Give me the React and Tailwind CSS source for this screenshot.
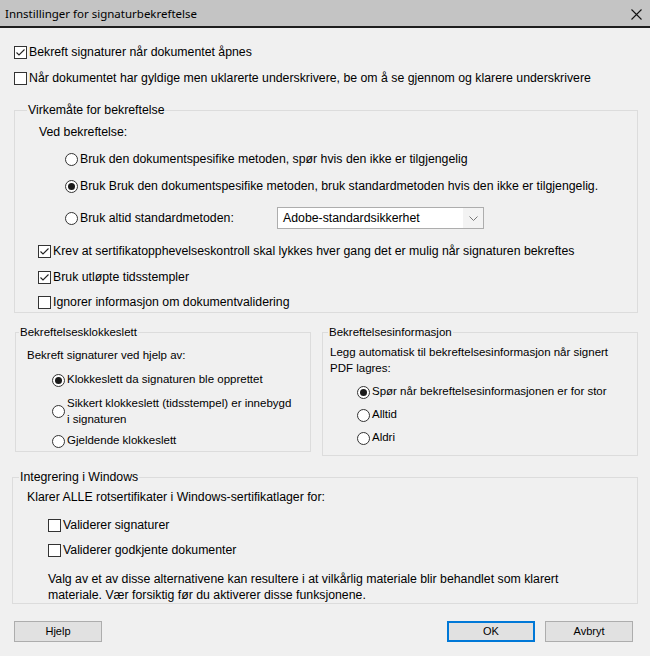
import React from 'react';

const font = { fontFamily: '"Liberation Sans", Arial, sans-serif' };

function CheckBox({ checked }) {
  return (
    <span className="flex h-[13px] w-[13px] shrink-0 items-center justify-center border border-[#333] bg-white">
      {checked && (
        <svg width="11" height="11" viewBox="0 0 11 11">
          <polyline points="1.5,5.5 4,8 9.5,2.5" fill="none" stroke="#222" strokeWidth="1.1" />
        </svg>
      )}
    </span>
  );
}

function Radio({ checked }) {
  return (
    <span className="flex h-[13px] w-[13px] shrink-0 items-center justify-center rounded-full border border-[#333] bg-white">
      {checked && <span className="h-[7px] w-[7px] rounded-full bg-[#1a1a1a]" />}
    </span>
  );
}

function Option({ type, checked, children, className = '' }) {
  return (
    <div className={`flex h-[20px] items-center gap-[2px] ${className}`}>
      {type === 'radio' ? <Radio checked={checked} /> : <CheckBox checked={checked} />}
      <span>{children}</span>
    </div>
  );
}

function Group({ title, className = '', legendClass = 'ml-[6px]', children }) {
  return (
    <fieldset className={`border border-[#dcdcdc] p-0 ${className}`}>
      <legend className={`px-[1px] leading-[16px] ${legendClass}`}>{title}</legend>
      {children}
    </fieldset>
  );
}

function Button({ primary, children }) {
  return (
    <button
      className={`h-[21px] w-[88px] bg-[#e1e1e1] text-[11px] ${
        primary ? 'border-2 border-[#0078d7]' : 'border border-[#adadad]'
      }`}
    >
      {children}
    </button>
  );
}

export default function App() {
  return (
    <div className="flex h-[656px] w-[650px] flex-col overflow-hidden bg-[#f0f0f0] text-[12.3px] text-black" style={font}>
      <div className="flex h-[28px] shrink-0 items-center justify-between border-b-2 border-[#1e1e1e] bg-[#c4c4c4] pl-[5px] pr-[8px] pt-[2px]">
        <span className="text-[11.5px]" style={{ fontFamily: '"Noto Sans", "Open Sans", sans-serif' }}>
          Innstillinger for signaturbekreftelse
        </span>
        <svg width="11" height="11" viewBox="0 0 11 11">
          <path d="M0.5 0.5L10.5 10.5M10.5 0.5L0.5 10.5" stroke="#111" strokeWidth="1.1" />
        </svg>
      </div>

      <div className="flex flex-col pl-[14px]">
        <Option type="check" checked className="mt-[14px]">Bekreft signaturer når dokumentet åpnes</Option>
        <Option type="check" className="mt-[6px]">
          Når dokumentet har gyldige men uklarerte underskrivere, be om å se gjennom og klarere underskrivere
        </Option>
      </div>

      <Group title="Virkemåte for bekreftelse" legendClass="ml-[12px]" className="ml-[14px] mt-[14px] w-[624px]">
        <div className="mt-[4px] flex h-[20px] items-center pl-[24px]">Ved bekreftelse:</div>
        <div className="flex flex-col pl-[50px]">
          <Option type="radio" className="mt-[7px]">
            Bruk den dokumentspesifike metoden, spør hvis den ikke er tilgjengelig
          </Option>
          <Option type="radio" checked className="mt-[7px]">
            Bruk Bruk den dokumentspesifike metoden, bruk standardmetoden hvis den ikke er tilgjengelig.
          </Option>
          <div className="mt-[11px] flex h-[22px] items-center">
            <Option type="radio" className="w-[212px]">Bruk altid standardmetoden:</Option>
            <div className="flex h-[22px] w-[207px] items-stretch border border-[#adadad] bg-white">
              <span className="flex flex-1 items-center pl-[5px]">Adobe-standardsikkerhet</span>
              <span className="flex w-[20px] items-center justify-center bg-[#f3f3f3]">
                <svg width="9" height="5" viewBox="0 0 9 5">
                  <polyline points="0.5,0.5 4.5,4.5 8.5,0.5" fill="none" stroke="#777" strokeWidth="1" />
                </svg>
              </span>
            </div>
          </div>
        </div>
        <div className="flex flex-col pl-[23px]">
          <Option type="check" checked className="mt-[12px]">
            Krev at sertifikatopphevelseskontroll skal lykkes hver gang det er mulig når signaturen bekreftes
          </Option>
          <Option type="check" checked className="mt-[6px]">Bruk utløpte tidsstempler</Option>
          <Option type="check" className="mt-[5px]">Ignorer informasjon om dokumentvalidering</Option>
        </div>
      </Group>

      <div className="mt-[11px] flex items-start gap-[11px] pl-[15px] text-[11.5px]">
        <Group title="Bekreftelsesklokkeslett" legendClass="ml-[3px]" className="w-[296px]">
          <div className="mt-[6px] flex h-[20px] items-center pl-[11px]">Bekreft signaturer ved hjelp av:</div>
          <div className="flex flex-col pl-[36px]">
            <Option type="radio" checked className="mt-[4px]">Klokkeslett da signaturen ble opprettet</Option>
            <div className="mt-[5px] flex items-center gap-[2px]">
              <Radio />
              <span className="leading-[16px]">
                Sikkert klokkeslett (tidsstempel) er innebygd
                <br />i signaturen
              </span>
            </div>
            <Option type="radio" className="mt-[4px]">Gjeldende klokkeslett</Option>
          </div>
        </Group>

        <Group title="Bekreftelsesinformasjon" legendClass="ml-[5px]" className="w-[316px] pb-[7px]">
          <div className="mt-[4px] pl-[7px] leading-[16px]">
            Legg automatisk til bekreftelsesinformasjon når signert
            <br />
            PDF lagres:
          </div>
          <div className="flex flex-col pl-[34px]">
            <Option type="radio" checked className="mt-[6px]">Spør når bekreftelsesinformasjonen er for stor</Option>
            <Option type="radio" className="mt-[3px]">Alltid</Option>
            <Option type="radio" className="mt-[3px]">Aldri</Option>
          </div>
        </Group>
      </div>

      <Group title="Integrering i Windows" className="ml-[12px] mt-[13px] w-[626px]">
        <div className="mt-[2px] flex h-[20px] items-center pl-[14px]">
          Klarer ALLE rotsertifikater i Windows-sertifikatlager for:
        </div>
        <div className="flex flex-col pl-[35px]">
          <Option type="check" className="mt-[8px]">Validerer signaturer</Option>
          <Option type="check" className="mt-[5px]">Validerer godkjente dokumenter</Option>
          <p className="mt-[11px] leading-[16px]">
            Valg av et av disse alternativene kan resultere i at vilkårlig materiale blir behandlet som klarert
            <br />
            materiale. Vær forsiktig før du aktiverer disse funksjonene.
          </p>
        </div>
      </Group>

      <div className="mt-[17px] flex items-center pl-[14px] pr-[17px]">
        <Button>Hjelp</Button>
        <div className="ml-auto flex gap-[10px]">
          <Button primary>OK</Button>
          <Button>Avbryt</Button>
        </div>
      </div>
    </div>
  );
}
